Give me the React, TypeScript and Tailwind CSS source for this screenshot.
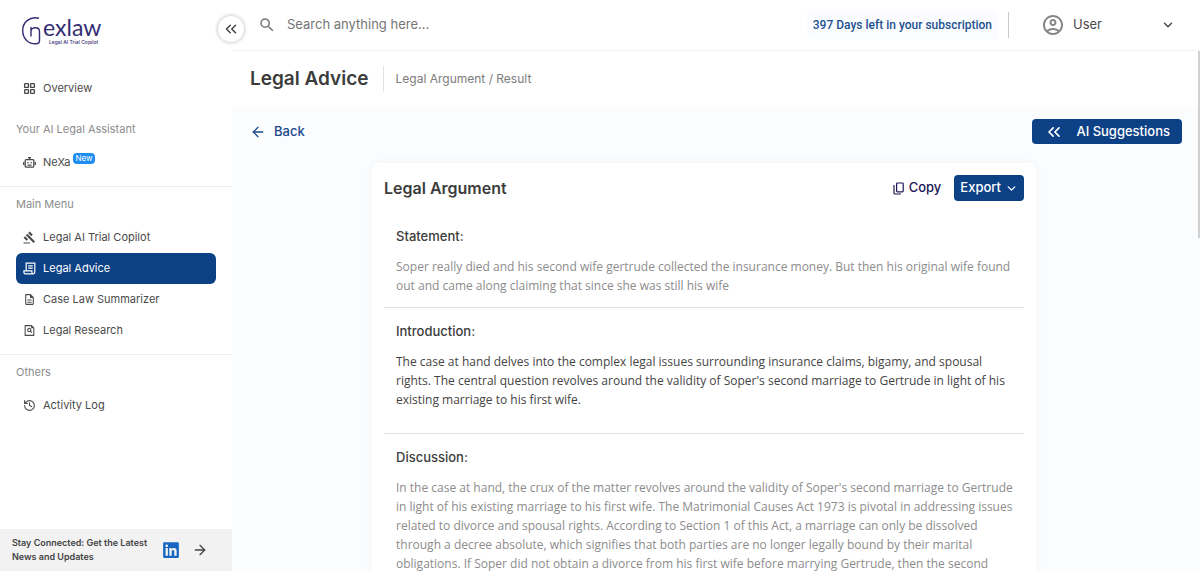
import type { ReactNode } from 'react';
import { FaLinkedin } from 'react-icons/fa';
import { FiChevronDown } from 'react-icons/fi';
import { LuArrowLeft, LuArrowRight, LuChevronsLeft, LuHistory, LuLayoutGrid } from 'react-icons/lu';
import {
  MdGavel,
  MdOutlineAccountCircle,
  MdOutlineDescription,
  MdSearch,
} from 'react-icons/md';
import { RiFileSearchLine } from 'react-icons/ri';

function Logo() {
  return (
    <svg viewBox="0 0 84 32" className="h-8 w-[84px] overflow-visible" role="img" aria-label="nexlaw">
      <path
        d="M18 2.200C8 .2 1.700 6.500 1.700 14.500c0 8.500 6 13.600 13.500 13.300 2.300-.1 3.300-1 3.300-3V15.500c0-5-8.500-5-8.500 0M10 11v9.500"
        fill="none"
        stroke="#332c72"
        strokeWidth="1.400"
      />
      <text x="22" y="20" fontSize="23" fill="#332c72" className="font-['Lato'] font-normal">exlaw</text>
      <text x="28" y="28" fontSize="5" fill="#332c72" className="font-['Inter'] font-medium">Legal AI Trial Copilot</text>
    </svg>
  );
}

function BotIcon() {
  return (
    <svg viewBox="0 0 13 13" className="size-[13px]" fill="none" stroke="currentColor" strokeWidth="1.300" aria-hidden>
      <rect x="2.200" y="3.600" width="8.600" height="7.600" rx="1" />
      <path d="M6.500 3.600V1M5 1.600h3M.7 6v3M12.300 6v3M4.500 9.200h4" />
      <path d="M4.200 6.600h1.300M7.500 6.600h1.300" />
    </svg>
  );
}

function ScrollIcon() {
  return (
    <svg viewBox="0 0 13 13" className="size-[13px]" fill="none" stroke="currentColor" strokeWidth="1.200" aria-hidden>
      <path d="M3.200 8.800V1.200h8.600v8.900c0 1-.6 1.700-1.500 1.700S8.900 11.100 8.900 10.200V8.900H.9v1.300c0 1 .6 1.600 1.500 1.600h7.900" />
      <path d="M5.200 3.800h4.600M5.200 6.200h4.600" />
    </svg>
  );
}

function CopyIcon() {
  return (
    <svg viewBox="0 0 11 13" className="h-[13px] w-[11px]" fill="none" stroke="currentColor" strokeWidth="1.200" aria-hidden>
      <rect x="3.600" y="1" width="6.600" height="8.800" rx="0.800" />
      <path d="M1 3v8.200c0 .5.3.8.8.8H8" />
    </svg>
  );
}

type NavItemProps = { icon: ReactNode; label: string; active?: boolean; badge?: string };

function NavItem({ icon, label, active, badge }: NavItemProps) {
  return (
    <a
      href="#"
      aria-current={active ? 'page' : undefined}
      className={`mx-4 flex h-[31px] items-center gap-[7px] rounded-md px-[7px] text-[11px] ${
        active ? 'bg-[#0d4186] text-white' : 'text-[#4a4a4a]'
      }`}
    >
      <span className="text-[13px]">{icon}</span>
      {label}
      {badge && (
        <span className="-ml-1 mb-2 rounded-sm bg-[#1e8df2] px-0.5 text-[8px] leading-[11px] text-white">{badge}</span>
      )}
    </a>
  );
}

function NavHeading({ children }: { children: ReactNode }) {
  return <h2 className="px-4 text-[11px] leading-4 text-[#8c8c8c]">{children}</h2>;
}

function Sidebar() {
  return (
    <aside className="relative flex w-[232px] shrink-0 flex-col bg-white">
      <div className="px-[21px] pt-4">
        <Logo />
      </div>
      <button
        type="button"
        aria-label="Collapse sidebar"
        className="absolute top-4 -right-3 z-10 flex size-[26px] items-center justify-center rounded-full bg-white text-[#444] shadow-[0_0_4px_rgba(0,0,0,0.3)]"
      >
        <LuChevronsLeft className="size-[18px]" />
      </button>
      <nav className="flex flex-1 flex-col pt-[25px]">
        <NavItem icon={<LuLayoutGrid className="stroke-[2.5]" />} label="Overview" />
        <div className="mt-[17px]">
          <NavHeading>Your AI Legal Assistant</NavHeading>
        </div>
        <div className="mt-[10px] border-b border-[#ededed] pb-2">
          <NavItem icon={<BotIcon />} label="NeXa" badge="New" />
        </div>
        <div className="mt-[9px] mb-[10px]">
          <NavHeading>Main Menu</NavHeading>
        </div>
        <div className="border-b border-[#f0f0f0] pb-2">
          <NavItem icon={<MdGavel />} label="Legal AI Trial Copilot" />
          <NavItem icon={<ScrollIcon />} label="Legal Advice" active />
          <NavItem icon={<MdOutlineDescription />} label="Case Law Summarizer" />
          <NavItem icon={<RiFileSearchLine />} label="Legal Research" />
        </div>
        <div className="mt-[9px] mb-[10px]">
          <NavHeading>Others</NavHeading>
        </div>
        <NavItem icon={<LuHistory />} label="Activity Log" />
      </nav>
      <a href="#" className="flex h-[42px] items-center bg-[#f2f2f2] px-3 text-[#444]">
        <span className="w-[150px] text-[9px] leading-[14px] font-semibold">
          Stay Connected: Get the Latest News and Updates
        </span>
        <FaLinkedin className="size-[18px] text-[#1966c2]" />
        <LuArrowRight className="ml-3 size-4" />
      </a>
    </aside>
  );
}

function TopBar() {
  return (
    <header className="flex h-[51px] shrink-0 items-center border-b border-[#f3f3f3] bg-white pr-[25px] pl-[26px]">
      <MdSearch className="size-[18px] shrink-0 text-[#777]" />
      <input
        type="search"
        aria-label="Search"
        placeholder="Search anything here..."
        className="ml-[11px] min-w-0 flex-1 text-[13px] placeholder-[#757575] outline-none"
      />
      <span className="rounded-sm bg-[#fafcff] px-1.5 py-1.5 font-['Roboto',sans-serif] text-xs font-medium text-[#1f518f]">
        397 Days left in your subscription
      </span>
      <span className="ml-2.5 h-[26px] w-px bg-[#c8c8c8]" />
      <button type="button" className="ml-8 flex w-[134px] items-center text-[13px] text-[#4a4a4a]">
        <MdOutlineAccountCircle className="mr-2 size-6 text-[#858585]" />
        User
        <FiChevronDown className="ml-auto size-[14px] stroke-[2.5]" />
      </button>
    </header>
  );
}

function Section({ title, muted, children }: { title: string; muted?: boolean; children: ReactNode }) {
  return (
    <section className="border-b border-[#dedede] pb-3 pl-3 last:border-0">
      <h3 className="pt-[13px] text-[13px] leading-5 font-medium text-[#3c3c3c]">{title}</h3>
      <div
        className={`pt-[11px] font-['Open_Sans',sans-serif] text-xs leading-[19px] ${
          muted ? 'text-[#8c8c8c]' : 'text-[#444]'
        }`}
      >
        {children}
      </div>
    </section>
  );
}

export default function App() {
  return (
    <div className="flex h-screen overflow-hidden bg-white font-['Inter',sans-serif]">
      <Sidebar />
      <div className="flex min-w-0 flex-1 flex-col">
        <TopBar />
        <main className="relative flex-1 overflow-hidden bg-[#fafcfe]">
          <div className="flex h-14 items-center bg-white pl-[18px]">
            <h1 className="border-r border-[#e2e2e2] pr-[14px] text-[19px] leading-[26px] font-semibold text-[#3c3c3c]">
              Legal Advice
            </h1>
            <span className="pl-3 text-xs text-[#7c7c7c]">Legal Argument / Result</span>
          </div>
          <div className="flex items-center justify-between px-[18px] pt-3">
            <a href="#" className="flex items-center gap-2 text-[13px] font-medium text-[#1d4a8b]">
              <LuArrowLeft className="size-4" />
              Back
            </a>
            <button
              type="button"
              className="flex h-[25px] items-center gap-3 rounded-sm bg-[#0d4186] px-3 text-[13px] font-medium text-white"
            >
              <LuChevronsLeft className="size-5" />
              AI Suggestions
            </button>
          </div>
          <div className="pt-[19px] pr-6">
            <article className="mx-auto max-w-[664px] rounded-md bg-white px-3 pt-3 shadow-[0_0_8px_rgba(0,0,0,0.04)]">
              <div className="flex items-center pb-3">
                <h2 className="text-base leading-6 font-semibold text-[#3c3c3c]">Legal Argument</h2>
                <button
                  type="button"
                  className="ml-auto flex items-center gap-[5px] text-[13px] font-medium text-[#1d1656]"
                >
                  <CopyIcon />
                  Copy
                </button>
                <button
                  type="button"
                  className="ml-[13px] flex h-[26px] items-center gap-1 rounded-sm bg-[#0d4186] px-1.5 text-[13px] font-medium text-white"
                >
                  Export
                  <FiChevronDown className="size-[13px] stroke-[2.5]" />
                </button>
              </div>
              <Section title="Statement:" muted>
                <p>
                  Soper really died and his second wife gertrude collected the insurance money. But then his original wife found<br />
                  out and came along claiming that since she was still his wife
                </p>
              </Section>
              <Section title="Introduction:">
                <p className="pb-3">
                  The case at hand delves into the complex legal issues surrounding insurance claims, bigamy, and spousal<br />
                  rights. The central question revolves around the validity of Soper's second marriage to Gertrude in light of his<br />
                  existing marriage to his first wife.
                </p>
              </Section>
              <Section title="Discussion:" muted>
                <p>
                  In the case at hand, the crux of the matter revolves around the validity of Soper's second marriage to Gertrude<br />
                  in light of his existing marriage to his first wife. The Matrimonial Causes Act 1973 is pivotal in addressing issues<br />
                  related to divorce and spousal rights. According to Section 1 of this Act, a marriage can only be dissolved<br />
                  through a decree absolute, which signifies that both parties are no longer legally bound by their marital<br />
                  obligations. If Soper did not obtain a divorce from his first wife before marrying Gertrude, then the second
                </p>
              </Section>
            </article>
          </div>
          <div className="absolute top-0 right-0 h-[187px] w-0.5 bg-[#d0d0d0]" />
        </main>
      </div>
    </div>
  );
}
